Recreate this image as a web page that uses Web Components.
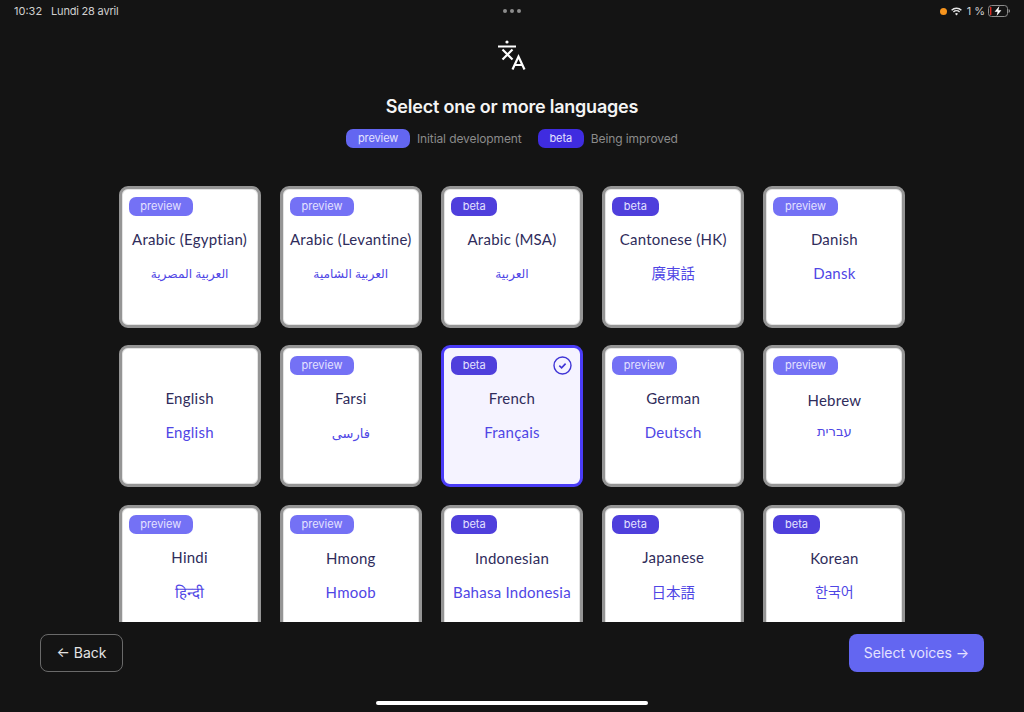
<!DOCTYPE html>
<html lang="en">
<head>
<meta charset="utf-8">
<title>Select languages</title>
<style>
    html, body { margin: 0; height: 100%; background: #141414; }
    body { font-family: "Inter", "Liberation Sans", sans-serif; overflow: hidden; }
</style>
</head>
<body>

<language-page>
    <lang-card badge="preview"><span>Arabic (Egyptian)</span><span slot="native" lang="ar" dir="rtl">العربية المصرية</span></lang-card>
    <lang-card badge="preview"><span>Arabic (Levantine)</span><span slot="native" lang="ar" dir="rtl">العربية الشامية</span></lang-card>
    <lang-card badge="beta"><span>Arabic (MSA)</span><span slot="native" lang="ar" dir="rtl">العربية</span></lang-card>
    <lang-card badge="beta"><span>Cantonese (HK)</span><span slot="native" lang="zh-Hant">廣東話</span></lang-card>
    <lang-card badge="preview"><span>Danish</span><span slot="native">Dansk</span></lang-card>

    <lang-card><span>English</span><span slot="native">English</span></lang-card>
    <lang-card badge="preview"><span>Farsi</span><span slot="native" lang="fa" dir="rtl">فارسی</span></lang-card>
    <lang-card badge="beta" selected><span>French</span><span slot="native">Français</span></lang-card>
    <lang-card badge="preview"><span>German</span><span slot="native">Deutsch</span></lang-card>
    <lang-card badge="preview" style="--name-shift: 2px; --native-shift: -4px"><span>Hebrew</span><span slot="native" lang="he" dir="rtl">עברית</span></lang-card>

    <lang-card badge="preview" style="--name-shift: -1px; --native-shift: 1px"><span>Hindi</span><span slot="native" lang="hi">हिन्दी</span></lang-card>
    <lang-card badge="preview"><span>Hmong</span><span slot="native">Hmoob</span></lang-card>
    <lang-card badge="beta"><span>Indonesian</span><span slot="native">Bahasa Indonesia</span></lang-card>
    <lang-card badge="beta" style="--name-shift: -1px; --native-shift: 1px"><span>Japanese</span><span slot="native" lang="ja">日本語</span></lang-card>
    <lang-card badge="beta" style="--native-shift: -1px"><span>Korean</span><span slot="native" lang="ko">한국어</span></lang-card>
</language-page>

<template id="TEMPLATE_STATUS">
    <style>
        :host {
            display: flex;
            align-items: center;
            height: 22px;
            padding: 0 14px;
            color: #d0d0d0;
            font-size: 11px;
        }
        .left { flex: 1; display: flex; gap: 9px; }
        .left span:last-child { letter-spacing: -.2px; }
        .dots { display: flex; gap: 3px; }
        .dots i { width: 4px; height: 4px; border-radius: 50%; background: #8c8c8c; }
        .right { flex: 1; display: flex; justify-content: flex-end; align-items: center; }
        .rec { width: 7px; height: 7px; border-radius: 50%; background: #f7941d; margin-right: 4px; }
        .pct { margin: 0 3px 0 5px; }
    </style>
    <div class="left"><span>10:32</span><span>Lundi 28 avril</span></div>
    <div class="dots"><i></i><i></i><i></i></div>
    <div class="right">
        <span class="rec"></span>
        <svg width="11" height="9" viewBox="0 0 11 9">
            <path d="M.6 3.2a7 7 0 0 1 9.8 0" fill="none" stroke="#e6e6e6" stroke-width="1.4"/>
            <path d="M2.4 5a4.4 4.4 0 0 1 6.2 0" fill="none" stroke="#e6e6e6" stroke-width="1.4"/>
            <path d="M4 6.8a2.2 2.2 0 0 1 3 0L5.5 8.4z" fill="#e6e6e6"/>
        </svg>
        <span class="pct">1 %</span>
        <svg width="22" height="12" viewBox="0 0 22 12">
            <rect x=".5" y=".5" width="19" height="11" rx="3" fill="none" stroke="#8c8c8c"/>
            <rect x="2" y="2" width="1.4" height="8" fill="#d8281f"/>
            <path d="M20.6 4v4a2 2 0 0 0 1.4-2 2 2 0 0 0-1.4-2z" fill="#8c8c8c"/>
            <path d="M11.4 1 6.6 6.8h3L8.6 11l4.8-5.8h-3z" fill="#fff"/>
        </svg>
    </div>
</template>

<template id="TEMPLATE_BADGE">
    <style>
        :host {
            display: inline-block;
            box-sizing: border-box;
            height: 19px;
            line-height: 19px;
            padding: 0 11.75px;
            border-radius: 7px;
            font-family: "Inter", "Liberation Sans", sans-serif;
            font-size: 11px;
            color: #e4e2ff;
            background: var(--badge-bg, #6366f1);
        }
    </style>
    <slot></slot>
</template>

<template id="TEMPLATE_CARD">
    <style>
        :host {
            display: block;
            position: relative;
            box-sizing: border-box;
            height: 142px;
            padding: 7px 7px;
            border: 3px solid #959595;
            border-radius: 9px;
            background: #fff;
            text-align: center;
            font-family: "Lato", "Noto Sans", sans-serif;
            box-shadow: inset 0 0 0 1px #e4e4e4;
        }
        :host([selected]) {
            border-color: #4a3cf7;
            background: #f5f3ff;
            box-shadow: none;
        }
        .top { display: flex; justify-content: space-between; align-items: center; height: 20px; }
        .name {
            margin-top: calc(13px + var(--name-shift, 0px));
            font-size: 15px;
            letter-spacing: .25px;
            line-height: 20px;
            color: #2f2c5b;
            white-space: nowrap;
        }
        .native {
            margin-top: calc(14px + var(--native-shift, 0px));
            font-size: 15px;
            letter-spacing: .25px;
            line-height: 20px;
            color: #4f46e5;
            white-space: nowrap;
            font-family: "Lato", "DejaVu Sans", "Noto Sans CJK TC", sans-serif;
        }
        ::slotted([lang="ar"]) { font-size: 12.2px; letter-spacing: 0; position: relative; top: -1px; }
        ::slotted([lang="fa"]) { font-size: 13px; letter-spacing: 0; }
        ::slotted([lang="he"]) { font-size: 13.2px; letter-spacing: 0; }
        ::slotted([lang="ja"]), ::slotted([lang="zh-Hant"]) { font-size: 14.5px; letter-spacing: 0; }
        ::slotted([lang="ko"]) { font-size: 14px; letter-spacing: 0; }
        svg { position: absolute; top: 8px; right: 8px; display: none; }
        :host([selected]) svg { display: block; }
    </style>
    <div class="top"><lang-badge></lang-badge></div>
    <svg width="19" height="19" viewBox="0 0 19 19">
        <circle cx="9.5" cy="9.5" r="8.5" fill="none" stroke="#3f34d6" stroke-width="1.4"/>
        <path d="M6.3 9.7l2.3 2.2 4-4.3" fill="none" stroke="#3f34d6" stroke-width="1.6"/>
    </svg>
    <div class="name"><slot></slot></div>
    <div class="native"><slot name="native"></slot></div>
</template>

<template id="TEMPLATE_PAGE">
    <style>
        :host {
            display: flex;
            flex-direction: column;
            height: 712px;
            color: #fff;
        }
        header { text-align: center; }
        .logo { display: block; margin: 17px auto 0; }
        h1 {
            margin: 22px 0 0;
            font-size: 18px;
            line-height: 26px;
            font-weight: 600;
            letter-spacing: -.22px;
            color: #f4f4f4;
        }
        .legend {
            display: flex;
            justify-content: center;
            align-items: center;
            margin-top: 9px;
            font-size: 12px;
            letter-spacing: -.1px;
            color: #8b8b8b;
        }
        .legend span { margin: 0 16px 0 7px; }
        .legend span:last-child { margin-right: 0; }
        .beta { --badge-bg: #3f2ce0; }
        .scroll {
            flex: 1;
            min-height: 0;
            overflow: hidden;
            margin-top: 38px;
        }
        .grid {
            width: 787px;
            margin: 0 auto;
            display: grid;
            grid-template-columns: repeat(5, 1fr);
            column-gap: 19px;
            row-gap: 17.3px;
        }
        footer {
            display: flex;
            justify-content: space-between;
            padding: 12px 40px 0;
            height: 90px;
            box-sizing: border-box;
            position: relative;
        }
        button {
            height: 38px;
            border-radius: 8px;
            font: 400 14px "Inter", "Liberation Sans", sans-serif;
            padding: 0 0 2px;
            white-space: nowrap;
        }
        .back { width: 83px; background: transparent; border: 1px solid #6a6a6a; color: #e4e4e4; }
        .next { width: 135px; background: #6366f1; border: 0; color: #e4e2ff; }
        .home {
            position: absolute;
            left: 376px;
            bottom: 7px;
            width: 272px;
            height: 4px;
            border-radius: 2px;
            background: #fff;
        }
    </style>
    <status-bar></status-bar>
    <header>
        <svg class="logo" width="30" height="33" viewBox="-1 0 30 33" fill="none" stroke="#fff" stroke-width="2.2">
            <path d="M0 7.5h18M4.5 10.500l10 10M14.500 10.500l-10 10M14.500 30.500l6-13 6 13M16.800 26h7.500"/>
            <circle cx="9" cy="3" r="1.600" fill="#fff" stroke="none"/>
        </svg>
        <h1>Select one or more languages</h1>
        <div class="legend">
            <lang-badge>preview</lang-badge><span>Initial development</span>
            <lang-badge class="beta">beta</lang-badge><span>Being improved</span>
        </div>
    </header>
    <div class="scroll"><div class="grid"><slot></slot></div></div>
    <footer>
        <button class="back">← Back</button>
        <button class="next">Select voices →</button>
        <div class="home"></div>
    </footer>
</template>

<script>
    function shadowFrom(el, id) {
        const shadow = el.attachShadow({ mode: "open" })
        shadow.append(document.getElementById(id).content.cloneNode(true))
        return shadow
    }

    customElements.define('status-bar', class extends HTMLElement {
        constructor() {
            super()
            shadowFrom(this, "TEMPLATE_STATUS")
        }
    })

    customElements.define('lang-badge', class extends HTMLElement {
        constructor() {
            super()
            shadowFrom(this, "TEMPLATE_BADGE")
        }
    })

    customElements.define('lang-card', class extends HTMLElement {
        constructor() {
            super()
            shadowFrom(this, "TEMPLATE_CARD")
        }

        connectedCallback() {
            const kind = this.getAttribute("badge")
            const badge = this.shadowRoot.querySelector("lang-badge")
            if (!kind) {
                badge.remove()
                return
            }
            badge.textContent = kind
            badge.style.setProperty("--badge-bg", kind === "beta" ? "#4f3fdc" : "#7471f5")
        }
    })

    customElements.define('language-page', class extends HTMLElement {
        constructor() {
            super()
            shadowFrom(this, "TEMPLATE_PAGE")
        }
    })
</script>
</body>
</html>
